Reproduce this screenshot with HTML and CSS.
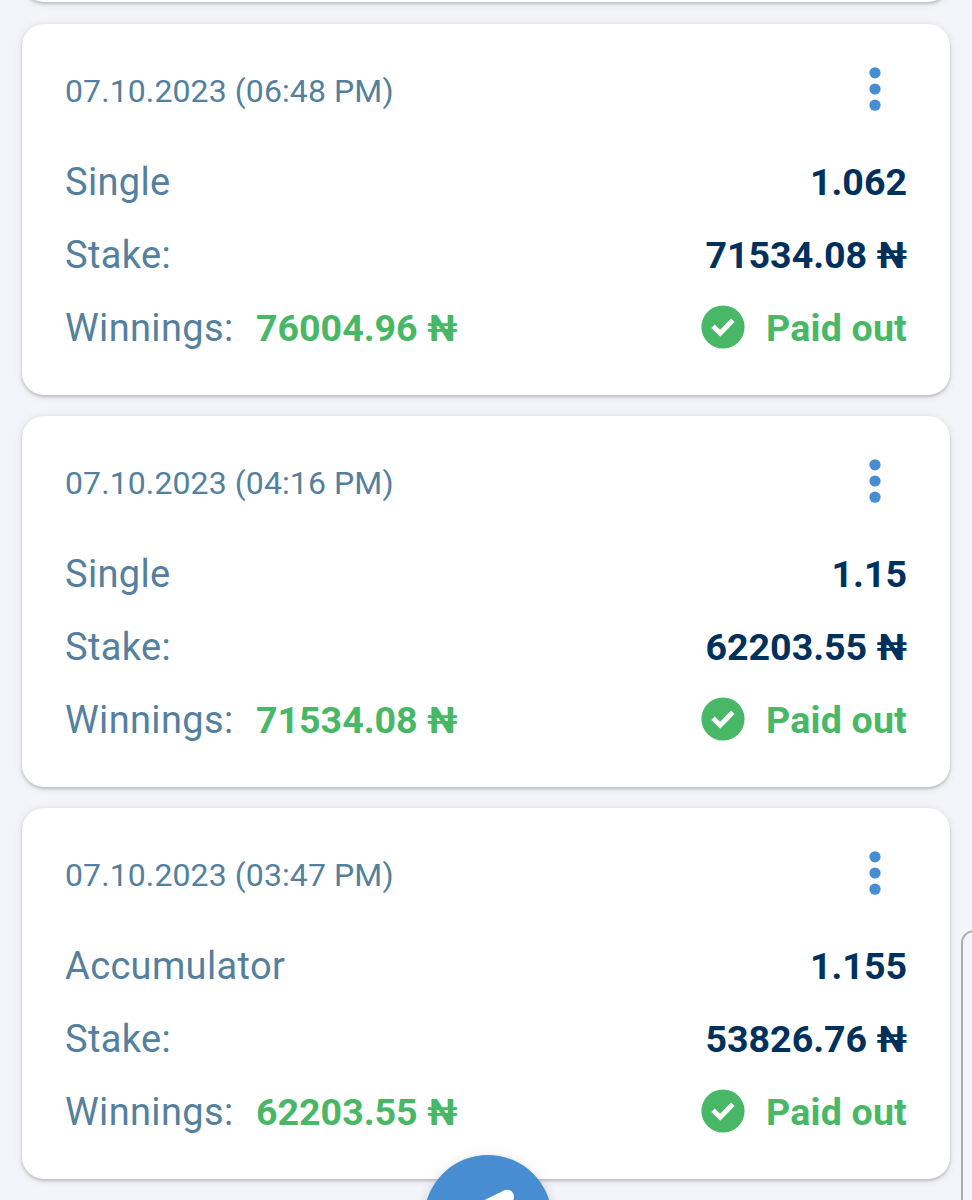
FILE: index.html
```html
<!DOCTYPE html>
<html lang="en">
<head>
<meta charset="utf-8">
<title>Bet history</title>
<link rel="stylesheet" href="styles.css">
</head>
<body>
<svg class="defs" width="0" height="0">
  <symbol id="dots" viewBox="0 0 12 44"><circle cx="6" cy="5.8" r="5.6"/><circle cx="6" cy="22" r="5.6"/><circle cx="6" cy="38.2" r="5.6"/></symbol>
  <symbol id="check" viewBox="0 0 44 44"><circle cx="22" cy="22" r="21.6" fill="#48b766"/><path d="M12 21.3L19.2 28.2L31.8 15.2" fill="none" stroke="#fff" stroke-width="4.9"/></symbol>
</svg>
<main class="history">
  <article class="card card-previous"></article>
  <article class="card">
    <header class="top"><time class="date">07.10.2023 (06:48 PM)</time><svg class="menu"><use href="#dots"/></svg></header>
    <div class="row"><span>Single</span><b class="value">1.062</b></div>
    <div class="row"><span>Stake:</span><b class="value">71534.08 ₦</b></div>
    <div class="row"><span>Winnings:<b class="win">76004.96 ₦</b></span><b class="status"><svg class="check"><use href="#check"/></svg>Paid out</b></div>
  </article>
  <article class="card">
    <header class="top"><time class="date">07.10.2023 (04:16 PM)</time><svg class="menu"><use href="#dots"/></svg></header>
    <div class="row"><span>Single</span><b class="value">1.15</b></div>
    <div class="row"><span>Stake:</span><b class="value">62203.55 ₦</b></div>
    <div class="row"><span>Winnings:<b class="win">71534.08 ₦</b></span><b class="status"><svg class="check"><use href="#check"/></svg>Paid out</b></div>
  </article>
  <article class="card">
    <header class="top"><time class="date">07.10.2023 (03:47 PM)</time><svg class="menu"><use href="#dots"/></svg></header>
    <div class="row"><span>Accumulator</span><b class="value">1.155</b></div>
    <div class="row"><span>Stake:</span><b class="value">53826.76 ₦</b></div>
    <div class="row"><span>Winnings:<b class="win">62203.55 ₦</b></span><b class="status"><svg class="check"><use href="#check"/></svg>Paid out</b></div>
  </article>
  <div class="edge-panel"></div>
  <button class="fab" aria-label="Bet slip"><svg viewBox="0 0 128 128"><path d="M50 58L83 41.7" stroke="#fff" stroke-width="14" stroke-linecap="round"/></svg></button>
</main>
</body>
</html>
```

FILE: styles.css
```css
body {
  margin: 0;
  background: #f3f5fa;
  font-family: Roboto, "Liberation Sans", sans-serif;
  color: #557f9f;
}
.defs { position: absolute; }
.history {
  position: relative;
  box-sizing: border-box;
  height: 1200px;
  overflow: hidden;
  padding: 0 22px;
  display: flex;
  flex-direction: column;
  gap: 21.5px;
}
.card {
  flex: none;
  box-sizing: border-box;
  height: 370.6px;
  padding: 31px 43px 0;
  border-radius: 22px;
  background: #fff;
  box-shadow: 0 2px 3px rgba(0, 0, 0, .18), 0 1px 10px rgba(0, 0, 0, .1);
}
.card-previous { margin-top: -368.4px; }
.card-previous + .card { margin-top: .5px; }
.top {
  display: flex;
  justify-content: space-between;
  align-items: center;
  height: 72px;
  margin-bottom: 18px;
}
.date { font-size: 32px; letter-spacing: .1px; }
.menu {
  width: 12px;
  height: 44px;
  margin: -4px 26px 0 0;
  fill: #488cd2;
}
.row {
  display: flex;
  justify-content: space-between;
  align-items: center;
  height: 73px;
  font-size: 38px;
  letter-spacing: .35px;
  white-space: nowrap;
}
.row b { font-size: 37.6px; font-weight: 700; letter-spacing: -.02px; }
.value { padding-top: 1px; color: #00305c; }
.row .win { margin-left: 22.5px; color: #48b766; }
.row .status {
  display: flex;
  align-items: center;
  color: #48b766;
  letter-spacing: .18px;
}
.check { width: 44px; height: 44px; margin: -2px 21px 0 0; }
.edge-panel {
  position: absolute;
  left: 961px;
  top: 930px;
  width: 40px;
  height: 300px;
  box-sizing: border-box;
  border: 2px solid #abadb1;
  border-radius: 13px;
  background: #f3f5fa;
}
.fab {
  position: absolute;
  left: 424px;
  top: 1155px;
  width: 128px;
  height: 128px;
  padding: 0;
  border: 0;
  border-radius: 50%;
  background: #488cd2;
  box-shadow: 0 3px 14px rgba(0, 0, 0, .16);
}
.fab svg { display: block; }
```
